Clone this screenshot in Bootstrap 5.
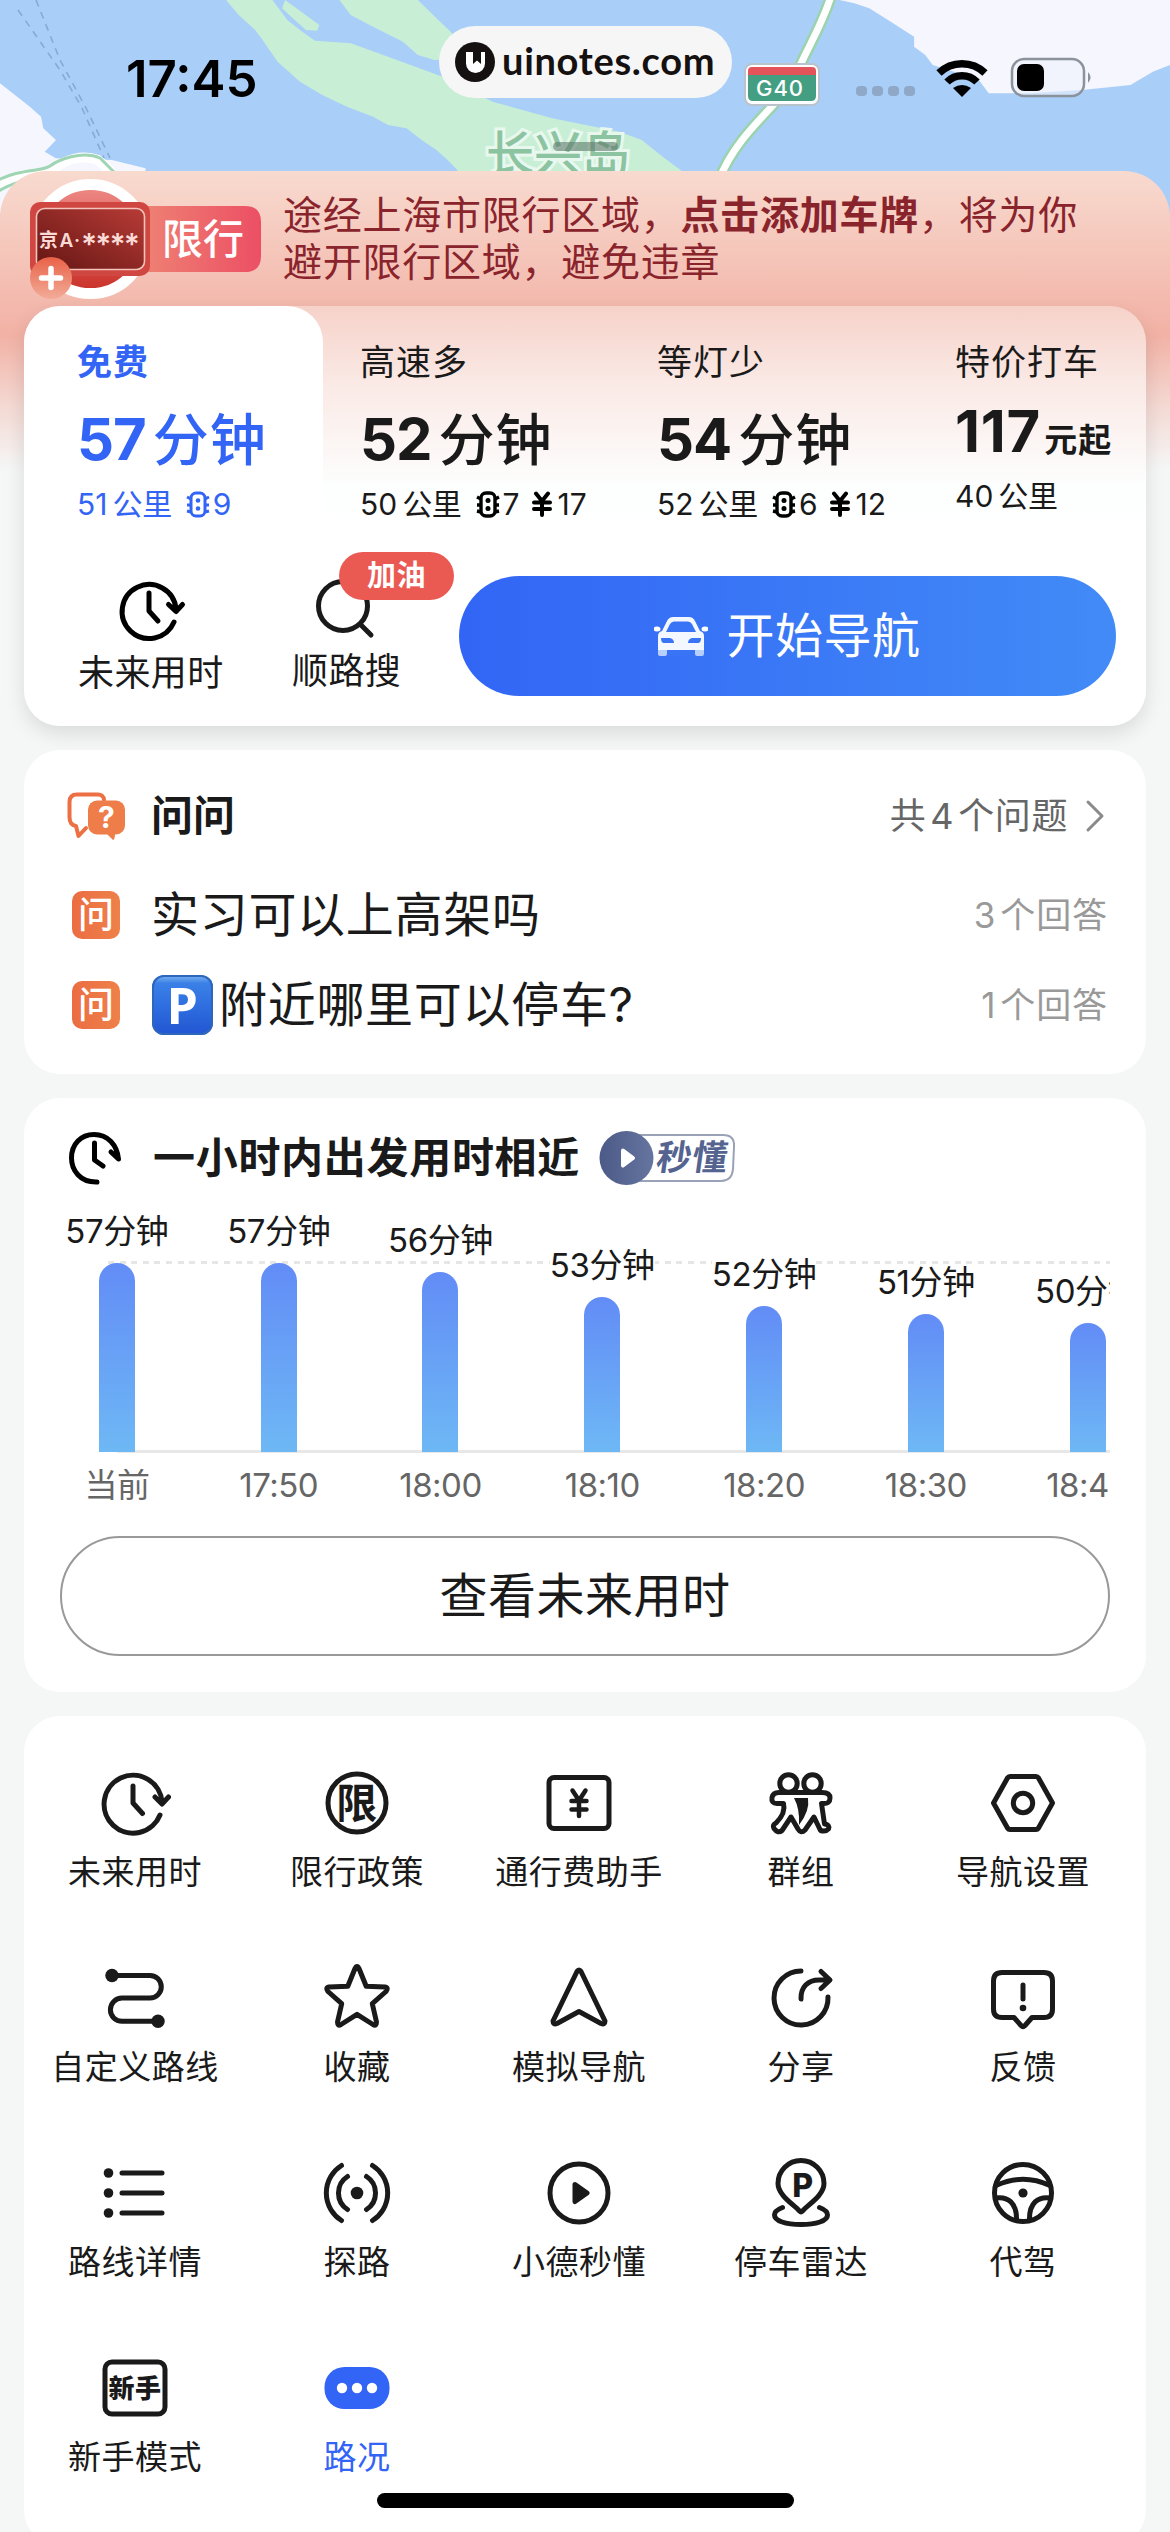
<!DOCTYPE html>
<html lang="zh-CN">
<head>
<meta charset="utf-8">
<meta name="viewport" content="width=device-width, initial-scale=1">
<title>路线规划</title>
<link rel="stylesheet" href="https://cdn.jsdelivr.net/npm/bootstrap@5.3.0/dist/css/bootstrap.min.css">
<script src="https://cdn.jsdelivr.net/npm/bootstrap@5.3.0/dist/js/bootstrap.bundle.min.js"></script>
<style>
:root{--ink:#1a1a1a;--brand:#3264f5;--page:#f5f7f7}
html,body{margin:0;height:2532px;overflow:hidden}
body{width:1170px;background:var(--page);color:var(--ink);font-family:Inter,"Noto Sans CJK SC",sans-serif;line-height:1}
svg{display:block;flex:none}
.ic{fill:none;stroke:currentColor;stroke-width:5;stroke-linecap:round;stroke-linejoin:round}
.ic text,.ic .solid{fill:currentColor;stroke:none}
.map-head{height:216px}
.status{top:0;left:0;width:1170px;height:120px;padding-left:126px}
.clock{font-size:51px;font-weight:600;letter-spacing:0;width:313px;padding-top:53px;color:#000}
.watermark{margin-top:26px;width:293px;height:72px;background:#f6f6f6;border-radius:36px;padding-left:16px;gap:7px;font:700 38px Lato,sans-serif;letter-spacing:.7px;color:#151110}
.watermark span{margin-top:-5px}
.sys{margin:56px 0 0 124px}
.sheet{margin-top:-45px;height:2400px;border-radius:46px 46px 0 0;background:linear-gradient(180deg,#f8dacf 0,#f3b6aa 145px,#f2b2a5 165px,#f4d9d3 235px,var(--page) 300px)}
.notice{height:135px;padding:0 0 0 24px}
.notice p{margin:21px 0 0 16px;font-size:39px;letter-spacing:.75px;line-height:46.5px;color:#8a242c;white-space:nowrap}
.panel{margin:0 24px 24px;border-radius:36px;background:#fff}
.routes{height:420px;background:linear-gradient(180deg,#f6d2c9 0,#faeae6 80px,#fdfefe 180px,#fff 230px);box-shadow:0 8px 20px rgba(0,0,0,.11)}
.tabs-row{height:226px}
.opt{padding-top:38px;white-space:nowrap}
.opt.on{width:299px;padding-left:53px;background:#fff;border-radius:36px 36px 0 0;color:var(--brand)}
.opt .name{font-size:35px;letter-spacing:1px;line-height:36px}
.opt.on .name{font-weight:700}
.opt .big{font-size:58px;font-weight:700;letter-spacing:-1px;line-height:60px;margin-top:26px}
.opt .big span{font-size:56px;font-weight:500;letter-spacing:1px;margin-left:7px;font-family:"Noto Sans CJK SC"}
.opt .fare{margin-top:21px;letter-spacing:.8px}
.opt .fare span{font-size:33px;margin-left:3px;font-weight:700}
.opt .sub{font-size:30px;line-height:32px;margin-top:19px;height:32px}
.opt .fare + .sub{margin-top:12px}
.opt .sub span{margin-left:5px;letter-spacing:-.3px}
.opt .sub svg{margin:0 3px 0 14px}
.opt .sub .yen{margin:0 6px 0 12px}
.act{font-size:36px;line-height:40px;letter-spacing:.4px}
.tag{left:47px;top:-23px;width:115px;height:48px;border-radius:24px;background:#eb5953;color:#fff;font-size:29px;font-weight:700}
.go{width:657px;height:120px;margin-top:44px;border-radius:60px;border:0;background:linear-gradient(90deg,#3265f5,#428bf7);color:#fff;font-size:48px;letter-spacing:.5px;gap:18px}
.faq{height:324px;padding:0 38px 0 43px}
.faq .icell{width:84px}
.faq .hd{height:78px;margin-top:27px;font-size:42px;font-weight:700}
.faq .hd small{font-size:36px;font-weight:400;color:#666;letter-spacing:.6px}
.num{margin:0 4px}
.faq .q{height:90px;font-size:48px;letter-spacing:.7px}
.faq .q .cnt{font-size:35px;color:#999;letter-spacing:.9px}
.ask{width:48px;height:48px;margin-left:5px;border-radius:10px;background:linear-gradient(90deg,#eb6d43,#ee8149);color:#fff;font-size:36px;font-weight:500;letter-spacing:0}
.pk{width:61px;height:60px;border-radius:12px;margin:0 6px 0 1px;background:linear-gradient(180deg,#7fb5f2 0,#3a80e6 14%,#2f6fe0 50%,#2255d2 100%);box-shadow:inset 0 0 0 2px #2d66bd;color:#fff;font:700 50px "Open Sans",sans-serif}
.soon{height:594px;padding-top:32px}
.soon .hd{height:56px;padding:0 0 0 42px;font-size:42px;font-weight:700;letter-spacing:.7px}
.chart{margin:18px 36px 0 12px;height:252px;overflow:hidden}
.chart::before{content:"";position:absolute;left:72px;right:0;top:57px;height:3px;background:repeating-linear-gradient(90deg,#e6e6e6 0 6px,transparent 6px 11.6px)}
.chart::after{content:"";position:absolute;left:81px;right:0;top:246px;height:3px;background:#e8e8e8}
.slot{width:161.8px;flex:none;height:248px;z-index:1}
.slot b{font-weight:400;font-size:33px;line-height:34px;margin-bottom:15px;background:#fff;letter-spacing:-.4px}
.slot i{width:36px;border-radius:18px 18px 0 0;background:linear-gradient(180deg,#628cf6,#6eb8f5)}
.ticks{margin:9px 36px 0 12px;overflow:hidden;font-size:33px;line-height:40px;color:#666;letter-spacing:-.5px}
.ticks span{width:161.8px;flex:none;text-align:center}
.future{margin:31px 36px 0;height:120px;border:2px solid #999;border-radius:60px;font-size:48px;letter-spacing:.5px}
.tools{height:830px;padding:51px 12px 0 0}
.tool{height:195px;font-size:33px;letter-spacing:.5px;line-height:40px}
.tool svg{margin-bottom:13px}
.homebar{left:377px;top:2493px;width:417px;height:15px;border-radius:8px;background:#000}
</style>
</head>
<body class="position-relative">

<header class="map-head position-relative overflow-hidden">
<svg width="1170" height="216" viewBox="0 0 1170 216">
<rect width="1170" height="216" fill="#a9cff8"/>
<g transform="scale(.7462 .33333)">
<path fill="#c8efd6" d="M303 0L320 45 342 90 352 120 372 185 402 245 432 285 465 320 500 350 520 375 545 385 565 420 585 450 600 480 615 515H915L885 465 860 420 830 395 740 355 660 305 605 240 520 170 470 130 422 122 405 95 385 60 365 0Z"/>
<path fill="#c8efd6" d="M382 0L428 75 425 92 410 90 395 60 378 25ZM455 0H560L585 55 606 100 610 180 582 180 560 165 540 125 500 80 470 45Z"/>
<path fill="#f5f6fe" d="M1125 0H1568V195L1545 215 1515 255 1450 270 1380 280 1325 280 1310 235 1285 220 1250 195 1240 165 1225 140 1225 110 1190 60 1165 25 1145 10Z"/>
<path fill="#f5f6fe" d="M0 250L20 285 40 320 55 350 58 385 75 420 60 455 75 475 150 480 195 505V640H0Z"/>
</g>
<path d="M-6 186C20 170 45 176 55 168S82 154 98 160L112 172" fill="none" stroke="#fff" stroke-width="10"/>
<path d="M-6 182C20 168 42 172 50 166S82 150 100 158L114 172M-6 194C20 176 60 172 110 180" fill="none" stroke="#9fd5b3" stroke-width="3"/>
<path d="M18 10L60 70 82 108 104 158M36 0L60 60 86 108 110 158" fill="none" stroke="#86aad6" stroke-width="1.6" stroke-dasharray="7 6"/>
<path d="M831-4C822 26 806 50 796 75S738 130 719 180" fill="none" stroke="#9bd3af" stroke-width="12"/>
<path d="M831-4C822 26 806 50 796 75S738 130 719 180" fill="none" stroke="#fff" stroke-width="7"/>
<rect x="745" y="64" width="74" height="41" rx="7" fill="#fff" stroke="#b9c3cb" stroke-width="2"/>
<path d="M748 75V71q0-4 4-4h60q4 0 4 4v4z" fill="#e5535a"/>
<path d="M748 75h68v21q0 5-5 5h-58q-5 0-5-5z" fill="#449f82"/>
<text x="780" y="96" font-family="Inter" font-weight="500" font-size="22" letter-spacing="1" fill="#fff" text-anchor="middle">G40</text>
<text x="486" y="171" font-family="Noto Sans CJK SC" font-weight="500" font-size="48" fill="#8cc3a1" stroke="#e9f8ee" stroke-width="6" paint-order="stroke">长兴岛</text>
<rect x="553" y="142" width="65" height="9" rx="4.5" fill="#5f7a6c" fill-opacity=".6"/>
</svg>
<div class="status position-absolute d-flex align-items-start">
<div class="clock">17:45</div>
<div class="watermark d-flex align-items-center">
<svg width="40" height="40" viewBox="0 0 40 40"><circle cx="20" cy="20" r="20" fill="#151110"/><path d="M11 10H18V22L22 18.500 26 22V10H30V21.500A9.500 9.500 0 0 1 11 21.500Z" fill="#fff"/></svg>
<span>uinotes.com</span></div>
<svg class="sys" width="240" height="44" viewBox="0 0 240 44">
<g fill="#8fa8c8"><rect y="30" width="11" height="10" rx="4"/><rect x="16" y="30" width="11" height="10" rx="4"/><rect x="32" y="30" width="11" height="10" rx="4"/><rect x="48" y="30" width="11" height="10" rx="4"/></g>
<g fill="none" stroke="#000" stroke-width="7.500"><path d="M83 17a33 33 0 0 1 46 0M91 26a21 21 0 0 1 30 0"/></g><path d="M97 32q9-6 18 0l-9 9z" fill="#000"/>
<rect x="156" y="3" width="72" height="37" rx="12" fill="#eef2fc" fill-opacity=".6" stroke="#8b929c" stroke-width="2.500"/><rect x="161" y="8" width="27" height="27" rx="7" fill="#000"/><path d="M232 16q5 5.500 0 11z" fill="#8b929c"/>
</svg>
</div>
</header>

<main class="sheet position-relative">
<section class="notice d-flex">
<svg width="243" height="135" viewBox="24 171 243 135">
<defs>
<linearGradient id="g1"><stop offset="0" stop-color="#ee8073"/><stop offset="1" stop-color="#ec4f64"/></linearGradient>
<linearGradient id="g2" x1="0" y1="1" x2="1" y2="0"><stop offset="0" stop-color="#641614"/><stop offset="1" stop-color="#b83b36"/></linearGradient>
<linearGradient id="g3" x2="0" y2="1"><stop offset="0" stop-color="#ee8a86"/><stop offset="1" stop-color="#c92f28"/></linearGradient>
<linearGradient id="g4" x2="0" y2="1"><stop offset="0" stop-color="#e96148"/><stop offset="1" stop-color="#f2ac98"/></linearGradient>
</defs>
<circle cx="90.500" cy="239" r="54.500" fill="url(#g3)" stroke="#fff" stroke-width="11"/>
<path d="M146 206h99q16 0 16 16v34q0 16-16 16h-99z" fill="url(#g1)"/>
<rect x="30" y="202" width="120" height="74" rx="10" fill="#d04641"/>
<rect x="36.500" y="208.500" width="108" height="61" rx="8" fill="url(#g2)" stroke="#f2c4bc" stroke-width="1.600"/>
<text x="39" y="247" font-family="Inter, Noto Sans CJK SC" font-weight="600" font-size="19" fill="#fbd9d4" textLength="41">京A·</text>
<text x="81" y="255" font-family="Inter" font-weight="600" font-size="30" fill="#fbd9d4" textLength="59" lengthAdjust="spacing">****</text>
<text x="162" y="254" font-family="Noto Sans CJK SC" font-weight="500" font-size="41" fill="#fff">限行</text>
<circle cx="51" cy="278" r="21" fill="url(#g4)"/><path d="M41.500 278h19M51 268.500v19" stroke="#fff" stroke-width="5.500" stroke-linecap="round"/>
</svg>
<p>途经上海市限行区域，<b>点击添加车牌</b>，将为你<br>避开限行区域，避免违章</p>
</section>

<section class="panel routes">
<div class="tabs-row d-flex">
<div class="opt on"><div class="name">免费</div><div class="big">57<span>分钟</span></div>
<div class="sub d-flex align-items-center">51<span>公里</span><svg width="24" height="27" viewBox="0 0 24 27"><g fill="none" stroke="currentColor" stroke-width="3"><rect x="5" y="2" width="14" height="23" rx="5"/><path d="M5 8L1 6M5 14H1M5 21l-4-1M19 8l4-2M19 14h4M19 21l4-1"/></g><circle cx="12" cy="9.500" r="2.300" fill="currentColor"/><circle cx="12" cy="17.500" r="2.300" fill="currentColor"/></svg>9</div></div>
<div class="opt" style="width:296px;padding-left:37px"><div class="name">高速多</div><div class="big">52<span>分钟</span></div>
<div class="sub d-flex align-items-center">50<span>公里</span><svg width="24" height="27" viewBox="0 0 24 27"><g fill="none" stroke="#000" stroke-width="3.400"><rect x="5" y="2" width="14" height="23" rx="5"/><path d="M5 8L1 6M5 14H1M5 21l-4-1M19 8l4-2M19 14h4M19 21l4-1"/></g><circle cx="12" cy="9.500" r="2.500"/><circle cx="12" cy="17.500" r="2.500"/></svg>7<svg class="yen" width="20" height="26" viewBox="0 0 20 26"><path d="M4 2.500L10 10 16 2.500M10 10V24M2 11.500H18M2 18H18" fill="none" stroke="#000" stroke-width="4" stroke-linecap="round"/></svg>17</div></div>
<div class="opt" style="width:298px;padding-left:38px"><div class="name">等灯少</div><div class="big">54<span>分钟</span></div>
<div class="sub d-flex align-items-center">52<span>公里</span><svg width="24" height="27" viewBox="0 0 24 27"><g fill="none" stroke="#000" stroke-width="3.400"><rect x="5" y="2" width="14" height="23" rx="5"/><path d="M5 8L1 6M5 14H1M5 21l-4-1M19 8l4-2M19 14h4M19 21l4-1"/></g><circle cx="12" cy="9.500" r="2.500"/><circle cx="12" cy="17.500" r="2.500"/></svg>6<svg class="yen" width="20" height="26" viewBox="0 0 20 26"><path d="M4 2.500L10 10 16 2.500M10 10V24M2 11.500H18M2 18H18" fill="none" stroke="#000" stroke-width="4" stroke-linecap="round"/></svg>12</div></div>
<div class="opt" style="padding-left:38px"><div class="name">特价打车</div><div class="big fare">117<span>元起</span></div>
<div class="sub d-flex align-items-center">40<span>公里</span></div></div>
</div>
<div class="d-flex" style="padding-left:54px">
<div class="act" style="width:214px">
<svg class="ic" width="72" height="72" viewBox="0 0 72 72" style="margin:43px 0 6px 38px;color:#000"><path d="M58 47A27 27 0 1 1 60 34M52.500 29.500L60 36.500 66.500 29.500M33 18V36L42 46"/></svg>未来用时</div>
<div class="act" style="width:167px">
<div class="position-relative"><svg class="ic" width="72" height="72" viewBox="0 0 72 72" style="margin:43px 0 4px 19px"><circle cx="32" cy="31" r="24.500"/><path d="M50 50L60 60"/></svg>
<div class="tag position-absolute d-flex align-items-center justify-content-center">加油</div></div>顺路搜</div>
<button class="go d-flex align-items-center justify-content-center">
<svg width="54" height="40" viewBox="0 0 54 40"><path d="M4 37V20q0-4 4-5l5-10q2-4 6-4h16q4 0 6 4l5 10q4 1 4 5v17z" fill="#f3f7ff"/><path d="M12 16l4-8q1.500-2.500 4-2.500h14q2.500 0 4 2.500l4 8z" fill="#3a74f6"/><path d="M7 22h9q4 1 4 5H10q-3 0-3-5zM47 22h-9q-4 1-4 5h10q3 0 3-5z" fill="#3a74f6"/><ellipse cx="3" cy="13" rx="3.500" ry="2.500" fill="#fff"/><ellipse cx="51" cy="13" rx="3.500" ry="2.500" fill="#fff"/><path d="M4 34h9v4q0 2-2 2H6q-2 0-2-2zM41 34h9v4q0 2-2 2h-5q-2 0-2-2z" fill="#b7cffc"/><path d="M13 34h28v6H13z" fill="#3a74f6"/></svg>
<span>开始导航</span></button>
</div>
</section>

<section class="panel faq d-flex flex-column">
<div class="hd d-flex align-items-center">
<div class="icell"><svg width="60" height="48" viewBox="0 0 60 48"><path d="M37 8C37 4 34 2.500 31 2.500H10Q2.500 2.500 2.500 10V25Q2.500 33 9 34L11.500 44 19 36" fill="none" stroke="#ec7044" stroke-width="4" stroke-linejoin="round" stroke-linecap="round"/><rect x="21" y="8.500" width="37" height="34" rx="9" fill="#ee7d49"/><path d="M39 41l7 7q2 0 2-7z" fill="#ee7d49"/><text x="39.500" y="36" font-family="Inter" font-weight="700" font-size="30" fill="#fff" text-anchor="middle">?</text></svg></div>
<span class="flex-grow-1">问问</span><small>共<span class="num">4</span>个问题</small>
<svg class="ic" width="20" height="36" viewBox="0 0 20 36" style="margin:0 3px 0 17px;color:#8a8a8a;stroke-width:3"><path d="M3 4L17 18 3 32"/></svg>
</div>
<div class="q d-flex align-items-center" style="margin-top:15px"><div class="icell"><div class="ask d-flex align-items-center justify-content-center">问</div></div><span class="flex-grow-1">实习可以上高架吗</span><span class="cnt"><span class="num">3</span>个回答</span></div>
<div class="q d-flex align-items-center"><div class="icell"><div class="ask d-flex align-items-center justify-content-center">问</div></div><div class="pk d-flex align-items-center justify-content-center">P</div><span class="flex-grow-1">附近哪里可以停车?</span><span class="cnt"><span class="num">1</span>个回答</span></div>
</section>

<section class="panel soon">
<div class="hd d-flex align-items-center">
<svg class="ic" width="60" height="60" viewBox="0 0 60 60" style="margin-right:27px;color:#000"><path d="M31 54C14 54.500 5.500 42 5.500 30C5.500 16 15 6.500 28 6.500C42 6.500 51 17 52.500 31L45 24M28.500 15V32L37 38"/></svg>
<span>一小时内出发用时相近</span>
<svg width="138" height="56" viewBox="0 0 138 56" style="margin-left:19px"><defs><linearGradient id="g5"><stop offset="0" stop-color="#4b5a86"/><stop offset="1" stop-color="#6675a0"/></linearGradient></defs><path d="M30 5H124q12 0 11 12l-1 22q-1 12-12 12H30z" fill="#fff" stroke="#9aa2b8" stroke-width="2"/><circle cx="27.500" cy="28" r="27" fill="url(#g5)"/><path d="M24 20.500l10 7.500-10 7.500z" fill="#fff" stroke="#fff" stroke-width="4" stroke-linejoin="round"/><text transform="translate(56 40) skewX(-8)" font-family="Noto Sans CJK SC" font-weight="700" font-size="35" fill="#54638f">秒懂</text></svg>
</div>
<div class="chart position-relative d-flex">
<div class="slot position-relative d-flex flex-column justify-content-end align-items-center"><b>57分钟</b><i style="height:189px"></i></div>
<div class="slot position-relative d-flex flex-column justify-content-end align-items-center"><b>57分钟</b><i style="height:189px"></i></div>
<div class="slot position-relative d-flex flex-column justify-content-end align-items-center"><b>56分钟</b><i style="height:180.500px"></i></div>
<div class="slot position-relative d-flex flex-column justify-content-end align-items-center"><b>53分钟</b><i style="height:155px"></i></div>
<div class="slot position-relative d-flex flex-column justify-content-end align-items-center"><b>52分钟</b><i style="height:146.500px"></i></div>
<div class="slot position-relative d-flex flex-column justify-content-end align-items-center"><b>51分钟</b><i style="height:138px"></i></div>
<div class="slot position-relative d-flex flex-column justify-content-end align-items-center"><b>50分钟</b><i style="height:129px"></i></div>
</div>
<div class="ticks d-flex"><span>当前</span><span>17:50</span><span>18:00</span><span>18:10</span><span>18:20</span><span>18:30</span><span>18:40</span></div>
<div class="future d-flex align-items-center justify-content-center">查看未来用时</div>
</section>

<section class="panel tools">
<div class="row row-cols-5 g-0">
<div class="col tool d-flex flex-column align-items-center"><svg class="ic" width="72" height="72" viewBox="0 0 72 72"><path d="M61 48A29 29 0 1 1 63 35M56 30L63 37 69.500 30M34 19V36L43.500 46.500"/></svg>未来用时</div>
<div class="col tool d-flex flex-column align-items-center"><svg class="ic" width="72" height="72" viewBox="0 0 72 72"><circle cx="36" cy="36" r="29"/><text x="36" y="51" font-family="Noto Sans CJK SC" font-weight="700" font-size="41" text-anchor="middle">限</text></svg>限行政策</div>
<div class="col tool d-flex flex-column align-items-center"><svg class="ic" width="72" height="72" viewBox="0 0 72 72"><rect x="6" y="10.500" width="60" height="51" rx="5"/><path stroke-width="4.500" d="M29.500 23.500L36 33.500 42.500 23.500M36 33.500V49M28.500 34H43.500M28.500 42.500H43.500"/></svg>通行费助手</div>
<div class="col tool d-flex flex-column align-items-center"><svg class="ic" width="72" height="72" viewBox="0 0 72 72"><circle cx="23.500" cy="16.500" r="8.700"/><circle cx="47.500" cy="16.500" r="8.700"/><path d="M14 25.500H57Q65 25.500 65 31Q65 37 58 36.500H56.500L59.500 57Q65 57.500 63.500 62Q61 65 55.500 63.500L49 50 40 63Q36 67 33 62L26 50 17 63.500Q13 67 9 61.500Q7 58 11 56Q21 46 18.500 36.500H12Q6 36.500 7 30.500Q8 25.500 14 25.500Z"/><path class="solid" d="M29 31H43Q45 44 34 58 35 42 29 31Z"/></svg>群组</div>
<div class="col tool d-flex flex-column align-items-center"><svg class="ic" width="72" height="72" viewBox="0 0 72 72"><path d="M6.500 36L20.500 11Q21.500 9.500 23 9.500H49Q50.500 9.500 51.500 11L65.500 36 51.500 61Q50.500 62.500 49 62.500H23Q21.500 62.500 20.500 61Z"/><circle cx="36" cy="36" r="9.700"/></svg>导航设置</div>

<div class="col tool d-flex flex-column align-items-center"><svg class="ic" width="72" height="72" viewBox="0 0 72 72"><path d="M13 13.500H51a11.300 11.300 0 0 1 0 22.600H23a11.500 11.500 0 0 0 0 23.200H58"/><circle class="solid" cx="13" cy="13.500" r="6.700"/><circle class="solid" cx="59" cy="59.300" r="6.700"/></svg>自定义路线</div>
<div class="col tool d-flex flex-column align-items-center"><svg class="ic" width="72" height="72" viewBox="0 0 72 72"><path d="M34 6.500Q36 2.500 38 6.500L45.200 24.300 64 25Q68 26 65 29.500L51.300 41.700 55.500 60Q55.500 64.500 52 62.500L36 52.300 20 62.500Q16.500 64.500 16.500 60L20.700 41.700 7 29.500Q4 26 8 25L26.800 24.300Z"/></svg>收藏</div>
<div class="col tool d-flex flex-column align-items-center"><svg class="ic" width="72" height="72" viewBox="0 0 72 72"><path d="M34 9.500Q36 6.500 38 9.500L62 59Q62 63 58 61.500L36 49.500 14 61.500Q10 63 10 59Z"/></svg>模拟导航</div>
<div class="col tool d-flex flex-column align-items-center"><svg class="ic" width="72" height="72" viewBox="0 0 72 72"><path d="M36 9A27 27 0 1 0 63 35M36 37C35.500 25 43 18 54 18H64M56 9.500L65 18 56 26.500"/></svg>分享</div>
<div class="col tool d-flex flex-column align-items-center"><svg class="ic" width="72" height="72" viewBox="0 0 72 72"><path d="M15 10.500H57q8.500 0 8.500 8.500V47q0 8.500-8.500 8.500H45L38 63.500Q36 65.500 34 63.500L27 55.500H15Q6.500 55.500 6.500 47V19Q6.500 10.500 15 10.500ZM36 23V37"/><circle class="solid" cx="36" cy="46" r="3.300"/></svg>反馈</div>

<div class="col tool d-flex flex-column align-items-center"><svg class="ic" width="72" height="72" viewBox="0 0 72 72"><path d="M23 16H63M23 36H63M23 56H63"/><g class="solid"><circle cx="9.500" cy="16" r="4.800"/><circle cx="9.500" cy="36" r="4.800"/><circle cx="9.500" cy="56" r="4.800"/></g></svg>路线详情</div>
<div class="col tool d-flex flex-column align-items-center"><svg class="ic" width="72" height="72" viewBox="0 0 72 72"><path d="M26.500 19.500A19.600 19.600 0 0 0 26.500 52.500M45.500 19.500A19.600 19.600 0 0 1 45.500 52.500M20.500 8.500A32.500 32.500 0 0 0 20.500 63.500M51.500 8.500A32.500 32.500 0 0 1 51.500 63.500"/><circle class="solid" cx="36" cy="36" r="6.300"/></svg>探路</div>
<div class="col tool d-flex flex-column align-items-center"><svg class="ic" width="72" height="72" viewBox="0 0 72 72"><circle cx="36" cy="36" r="29"/><path d="M32 27.500L44 36 32 44.500Z" fill="currentColor"/></svg>小德秒懂</div>
<div class="col tool d-flex flex-column align-items-center"><svg class="ic" width="72" height="72" viewBox="0 0 72 72"><path d="M34.500 54Q36 55.500 37.500 54C44 47 59 38 59 26.500A23 23 0 0 0 13 26.500C13 38 28 47 34.500 54ZM17.500 50.500C11 53 9.500 56 9.500 58C9.500 64 21 67.500 36 67.500S62.500 64 62.500 58C62.500 56 61 53 54.500 50.500"/><text x="38" y="39.500" font-family="Inter" font-weight="800" font-size="32" text-anchor="middle">P</text></svg>停车雷达</div>
<div class="col tool d-flex flex-column align-items-center"><svg class="ic" width="72" height="72" viewBox="0 0 72 72"><circle cx="36" cy="36" r="28.500"/><path d="M9 28.500Q36 16 63 28.500M8.500 41C21 39 30 46 29.500 63M63.500 41C51 39 42 46 42.500 63"/><circle class="solid" cx="36" cy="36" r="4.600"/></svg>代驾</div>

<div class="col tool d-flex flex-column align-items-center"><svg class="ic" width="72" height="72" viewBox="0 0 72 72"><rect x="6" y="10" width="60" height="52" rx="7"/><text x="36" y="46" font-family="Noto Sans CJK SC" font-weight="900" font-size="26" text-anchor="middle">新手</text></svg>新手模式</div>
<div class="col tool d-flex flex-column align-items-center" style="color:var(--brand)"><svg width="72" height="72" viewBox="0 0 72 72"><rect x="3.500" y="15" width="65" height="42" rx="20" fill="#3264f5"/><g fill="#fff"><circle cx="21" cy="36" r="5.200"/><circle cx="36" cy="36" r="5.200"/><circle cx="51" cy="36" r="5.200"/></g></svg>路况</div>
</div>
</section>
</main>
<div class="homebar position-absolute"></div>
</body>
</html>
